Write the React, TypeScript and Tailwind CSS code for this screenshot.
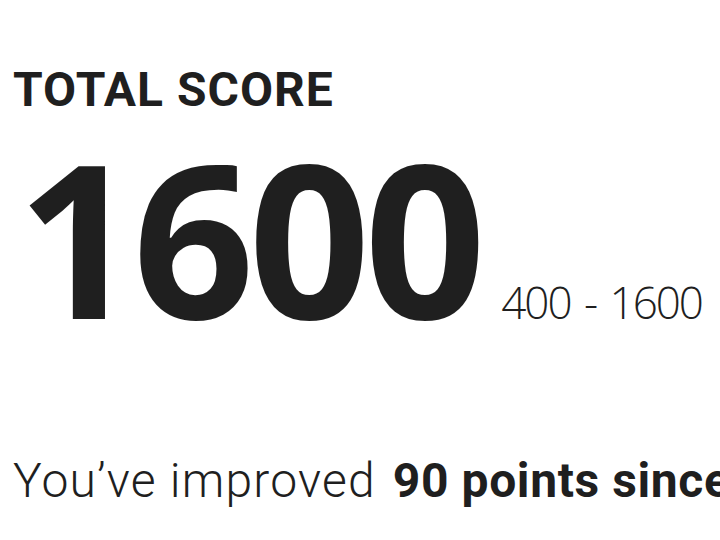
export default function App() {
  return (
    <div className="w-[720px] h-[540px] overflow-hidden bg-white text-[#1f1f1f]">
      <div className="pl-[13px] pt-[62px]">
        <h2 className="font-['Roboto',sans-serif] font-bold text-[48px] leading-[56px] tracking-[1px]">TOTAL SCORE</h2>
        <div className="mt-[12px] flex items-baseline whitespace-nowrap">
          <span className="font-['Open_Sans',sans-serif] font-bold text-[213px] leading-none tracking-[-6px] pl-[4px]">1600</span>
          <span className="ml-[21px] font-['Open_Sans',sans-serif] font-light text-[44px] leading-none tracking-[-2px] [word-spacing:4px]">400 - 1600</span>
        </div>
        <p className="mt-[114px] whitespace-nowrap font-['Roboto',sans-serif] font-light text-[48px] leading-none tracking-[1.2px]">
          You’ve improved <span className="ml-[4px] font-bold tracking-[0.6px]">90 points since your last test</span>
        </p>
      </div>
    </div>
  );
}
